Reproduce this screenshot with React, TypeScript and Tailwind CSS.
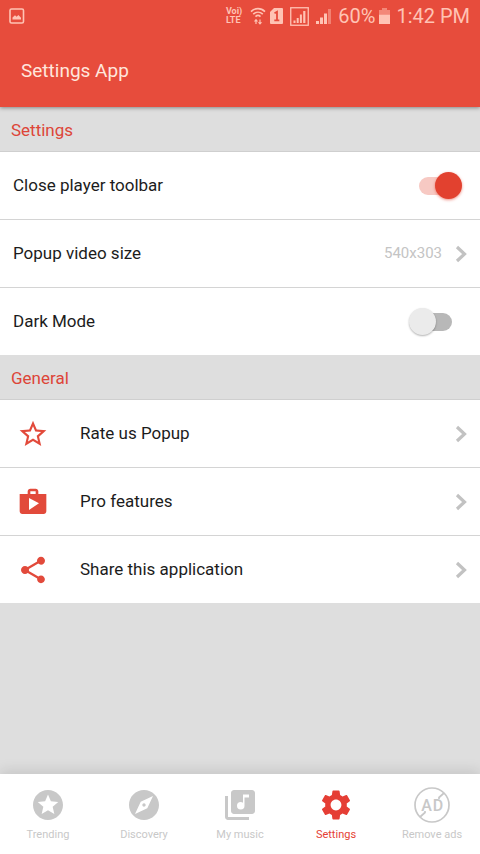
import { useState } from 'react';
import type { ReactNode } from 'react';
import { MdExplore, MdLibraryMusic, MdSettings, MdShare, MdShop, MdStarBorder, MdStars } from 'react-icons/md';

function PictureIcon() {
  return (
    <svg className="size-4" viewBox="0 0 16 16" fill="none" aria-hidden="true">
      <rect x="1" y="1" width="13.5" height="14" rx="1.5" stroke="currentColor" strokeWidth="1.6" />
      <path d="M3.5 11.5V9.5L6 7.2l1.6 1.6L9.4 7l2.6 2.8v1.7z" fill="currentColor" />
    </svg>
  );
}

function WifiIcon() {
  return (
    <svg className="h-[18px] w-4" viewBox="0 0 16 18" fill="none" stroke="currentColor" aria-hidden="true">
      <path d="M1 4.6C5 .6 11 .6 15 4.6M3.2 7.2c2.8-2.7 6.8-2.7 9.6 0M5.5 9.6c1.5-1.4 3.5-1.4 5 0" strokeWidth="1.6" />
      <path d="M6 17v-4M10 12.5v4" strokeWidth="1.2" />
      <path d="M3.8 14.4L6 11.8l2.200 2.600zM7.800 15.200l2.200 2.600 2.200-2.600z" fill="currentColor" stroke="none" />
    </svg>
  );
}

function SimIcon() {
  return (
    <svg className="h-4 w-[13px]" viewBox="0 0 13 16" aria-hidden="true">
      <path d="M4 0h8a1 1 0 0 1 1 1v14a1 1 0 0 1-1 1H1a1 1 0 0 1-1-1V4z" fill="currentColor" />
      <path d="M4.500 5.300L7 3.800V12.500M4.300 12.300h5" fill="none" stroke="#e74c3c" strokeWidth="1.800" />
    </svg>
  );
}

function BoxedSignalIcon() {
  return (
    <svg className="size-[19px]" viewBox="0 0 19 19" aria-hidden="true">
      <rect x=".75" y=".75" width="17.5" height="17.5" fill="none" stroke="currentColor" strokeWidth="1.3" />
      <path d="M3.5 13.5h2V16h-2zM6.7 11h2v5h-2zM9.900 7.500h2V16h-2zM13.200 4h2.200v12h-2.200z" fill="currentColor" />
    </svg>
  );
}

function SignalIcon() {
  return (
    <svg className="h-4 w-[15px]" viewBox="0 0 15 16" fill="currentColor" aria-hidden="true">
      <path d="M0 13h3v3H0zM4 9.5h3V16H4zM8 5.5h3V16H8z" />
      <path d="M12 1h3v15h-3z" opacity=".45" />
    </svg>
  );
}

function BatteryIcon() {
  return (
    <svg className="h-4 w-[11px]" viewBox="0 0 11 16" fill="currentColor" aria-hidden="true">
      <path d="M3 0h5v2h3v4.5H0V2h3z" opacity=".5" />
      <path d="M0 6.5h11V16H0z" />
    </svg>
  );
}

function NoAdsIcon() {
  return (
    <svg className="size-9" viewBox="0 0 36 36" fill="none" stroke="currentColor" aria-hidden="true">
      <circle cx="18" cy="18" r="17" strokeWidth="1.7" />
      <path d="M6 30l5-4.5V24M30 6l-5 4.500V12" strokeWidth="1.700" />
      <g fill="currentColor" stroke="none" fontSize="16" fontWeight="500" textAnchor="middle">
        <text x="12.5" y="23.500">A</text>
        <text x="24" y="23.500">D</text>
      </g>
    </svg>
  );
}

function Chevron() {
  return (
    <svg className="h-[18px] w-3 shrink-0 text-[#c2c2c2]" viewBox="0 0 12 18" aria-hidden="true">
      <path d="M2 2l7.500 7L2 16" fill="none" stroke="currentColor" strokeWidth="3.200" />
    </svg>
  );
}

function StatusBar() {
  return (
    <div className="flex h-8 items-center justify-between pr-[10px] pl-[9px] text-[#ffc3b4]">
      <PictureIcon />
      <div className="flex items-center text-xl">
        <span className="mr-2 text-[9px] leading-[9px] font-bold">
          Voi)
          <br />
          LTE
        </span>
        <WifiIcon />
        <span className="ml-1 flex items-center gap-[7px]">
          <SimIcon />
          <BoxedSignalIcon />
          <SignalIcon />
        </span>
        <span className="mr-1 ml-[7px]">60%</span>
        <BatteryIcon />
        <span className="ml-1.5">1:42 PM</span>
      </div>
    </div>
  );
}

function SectionTitle({ children }: { children: ReactNode }) {
  return <h2 className="flex h-[45px] items-center border-b border-[#cfcfcf] px-[11px] pt-[3px] text-[17px] text-[#dd4538]">{children}</h2>;
}

function ToggleRow({ label, initial }: { label: string; initial: boolean }) {
  const [on, setOn] = useState(initial);
  return (
    <label className="flex h-[67px] items-center justify-between bg-white pr-7 pl-[13px]">
      {label}
      <input
        type="checkbox"
        role="switch"
        checked={on}
        onChange={() => setOn(!on)}
        className="relative h-[18px] w-[33px] appearance-none rounded-full bg-[#b8b8b8] before:absolute before:-top-[5px] before:-left-2.5 before:size-[27px] before:rounded-full before:bg-[#ebebeb] before:shadow-[0_1px_2px_rgba(0,0,0,0.3)] checked:bg-[#f7c9c3] checked:before:left-4 checked:before:bg-[#e2412f] checked:before:shadow-[0_1px_3px_rgba(226,65,47,0.6)]"
      />
    </label>
  );
}

function LinkRow({ label, icon, value }: { label: string; icon?: ReactNode; value?: string }) {
  return (
    <button type="button" className="flex h-[67px] w-full items-center bg-white px-[13px] text-left">
      {icon && <span className="mr-[27px] flex w-10 justify-center text-[#e24a3b]">{icon}</span>}
      <span className="flex-1">{label}</span>
      {value && <span className="mr-[13px] text-[15px] text-[#c4c4c4]">{value}</span>}
      <Chevron />
    </button>
  );
}

const tabs = [
  { label: 'Trending', icon: <MdStars className="size-9" /> },
  { label: 'Discovery', icon: <MdExplore className="size-9" /> },
  { label: 'My music', icon: <MdLibraryMusic className="size-9" /> },
  { label: 'Settings', icon: <MdSettings className="size-9" />, active: true },
  { label: 'Remove ads', icon: <NoAdsIcon /> },
];

export default function App() {
  return (
    <div className="flex min-h-screen flex-col bg-[#dedede] font-[Roboto,sans-serif] text-[17px] text-[#1c1c1c]">
      <header className="z-10 bg-[#e74c3c] shadow-[0_1px_4px_rgba(0,0,0,0.4)]">
        <StatusBar />
        <h1 className="flex h-[75px] items-center px-[21px] pt-[3px] text-[19px] text-[#ffe6dc]">Settings App</h1>
      </header>

      <main className="flex-1">
        <section>
          <SectionTitle>Settings</SectionTitle>
          <div className="flex flex-col gap-px bg-[#d4d4d4]">
            <ToggleRow label="Close player toolbar" initial={true} />
            <LinkRow label="Popup video size" value="540x303" />
            <ToggleRow label="Dark Mode" initial={false} />
          </div>
        </section>
        <section>
          <SectionTitle>General</SectionTitle>
          <div className="flex flex-col gap-px bg-[#d4d4d4]">
            <LinkRow label="Rate us Popup" icon={<MdStarBorder className="size-8" />} />
            <LinkRow label="Pro features" icon={<MdShop className="size-8" />} />
            <LinkRow label="Share this application" icon={<MdShare className="size-8" />} />
          </div>
        </section>
      </main>

      <nav className="grid h-20 grid-cols-5 bg-white shadow-[0_-4px_12px_rgba(0,0,0,0.1)]">
        {tabs.map((tab) => (
          <button
            key={tab.label}
            type="button"
            aria-current={tab.active ? 'page' : undefined}
            className={`flex flex-col items-center gap-1 pt-[13px] text-[11px] leading-4 ${tab.active ? 'text-[#e53e35]' : 'text-[#c8c8c8]'}`}
          >
            {tab.icon}
            {tab.label}
          </button>
        ))}
      </nav>
    </div>
  );
}
